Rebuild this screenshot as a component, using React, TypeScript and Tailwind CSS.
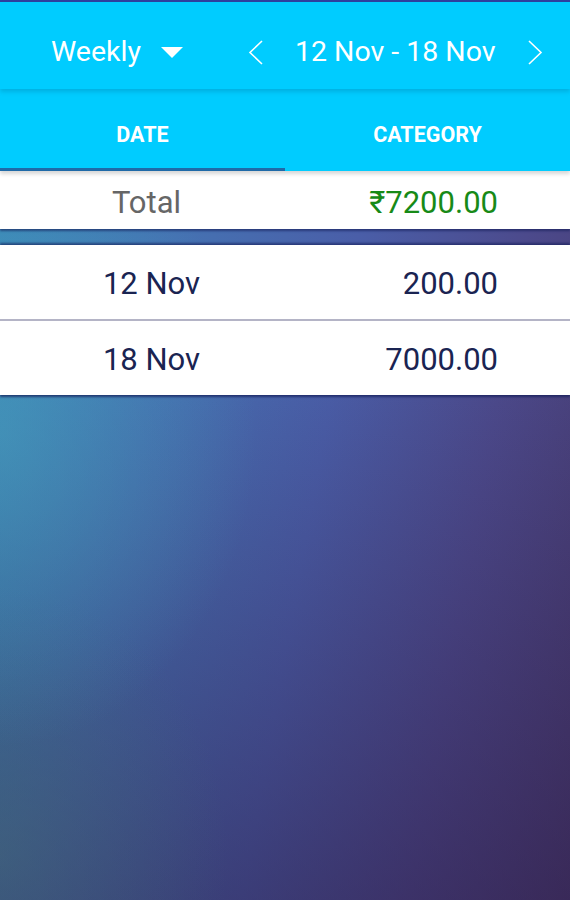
const rows = [
  { date: "12 Nov", amount: "200.00" },
  { date: "18 Nov", amount: "7000.00" },
];

function Chevron({ dir }: { dir: "left" | "right" }) {
  return (
    <svg width="16" height="25" viewBox="0 0 16 25" fill="none" stroke="white" strokeWidth="1.6">
      {dir === "left" ? <path d="M14 1 L2 12.5 L14 24" /> : <path d="M2 1 L14 12.5 L2 24" />}
    </svg>
  );
}

export default function App() {
  return (
    <div
      className="relative min-h-[900px] w-full overflow-hidden bg-[radial-gradient(ellipse_45%_35%_at_0%_48%,rgba(70,160,190,0.55),rgba(70,160,190,0)),radial-gradient(ellipse_40%_30%_at_0%_95%,rgba(70,110,120,0.45),rgba(70,110,120,0)),linear-gradient(180deg,rgba(20,10,40,0)_40%,rgba(40,20,60,0.45)_100%),linear-gradient(100deg,#3a8cb8_0%,#4572b2_30%,#4a5ea8_55%,#4c4a8c_78%,#473b70_100%)]"
      style={{ fontFamily: "Roboto, 'Noto Sans', sans-serif" }}
    >
      <div className="h-[2px] bg-[#2e40a0]" />

      {/* header */}
      <div className="relative z-20 flex h-[87px] items-center bg-[#00ccff] pt-[14px] shadow-[0_3px_4px_rgba(0,110,150,0.28)]">
        <div className="flex items-center pl-[51px] text-[28.5px] text-white">
          <span>Weekly</span>
          <svg width="22" height="12" viewBox="0 0 22 12" className="ml-[20px] mt-[1px]">
            <path d="M0 0 H22 L11 11 Z" fill="white" />
          </svg>
        </div>
        <div className="ml-[65px]">
          <Chevron dir="left" />
        </div>
        <span className="ml-[31px] text-[28.5px] text-white">12 Nov - 18 Nov</span>
        <div className="ml-[31px]">
          <Chevron dir="right" />
        </div>
      </div>

      {/* tabs */}
      <div className="relative z-10 bg-[#00ccff] shadow-[0_3px_4px_rgba(0,0,0,0.16)]">
        <div className="grid h-[82px] grid-cols-2">
          <div className="flex flex-col">
            <div className="flex flex-1 items-center justify-center pt-[14px] text-[21.5px] font-bold text-white">DATE</div>
            <div className="h-[3px] bg-[#1f6aa8]" />
          </div>
          <div className="flex items-center justify-center pt-[11px] text-[21.5px] font-bold text-white">CATEGORY</div>
        </div>
      </div>

      {/* total */}
      <div className="flex h-[58px] items-center bg-white pt-[6px] shadow-[0_2px_2px_rgba(20,30,90,0.6)]">
        <div className="w-[293px] text-center text-[31px] text-[#666666]">Total</div>
        <div className="flex-1 pr-[72px] text-right text-[31px] text-[#178a17]">₹7200.00</div>
      </div>

      {/* list */}
      <div className="mt-[16px] bg-white shadow-[0_-2px_2px_rgba(20,30,90,0.6),0_2px_2px_rgba(20,30,90,0.7)]">
        {rows.map((r, i) => (
          <div key={r.date}>
            {i > 0 && <div className="h-[2px] bg-[#b4b4c6]" />}
            <div className="flex h-[74px] items-center pt-[5px]">
              <div className="w-[303px] text-center text-[31px] text-[#1a2452]">{r.date}</div>
              <div className="flex-1 pr-[72px] text-right text-[31px] text-[#1a2452]">{r.amount}</div>
            </div>
          </div>
        ))}
      </div>
    </div>
  );
}
